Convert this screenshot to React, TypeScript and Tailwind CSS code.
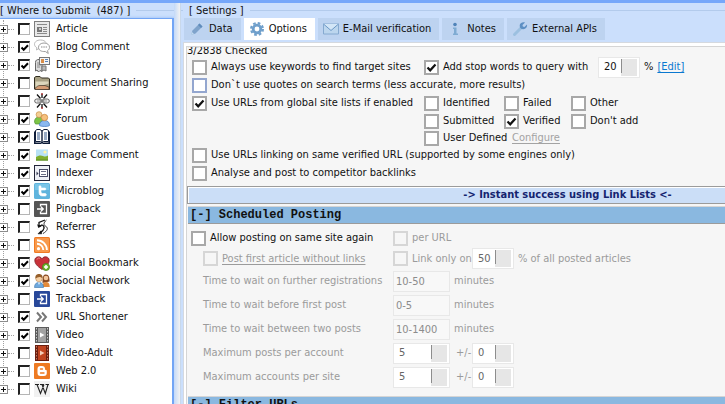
import { useId, type ReactNode } from 'react';
import clsx from 'clsx';

/* ---------- tree icons (16x16) ---------- */

const icons: Record<string, ReactNode> = {
  article: (
    <>
      <rect x=".5" y=".5" width="15" height="15" fill="#e9e9e9" stroke="#7d7d7d" />
      <path d="M3 3.500h10M3 12.500h10M9 8.500h4M9 10.500h4M9 6.500h4" stroke="#8a8a8a" />
      <rect x="3" y="6" width="5" height="5" fill="#777" />
      <rect x="5" y="7" width="2" height="2" fill="#ccc" />
    </>
  ),
  blog: (
    <>
      <path d="M6.500 1C3 1 .5 2.800.5 5.200c0 1.500.9 2.700 2.300 3.500L2.500 11l2.500-1.700" fill="#fff" stroke="#b9b9b9" />
      <path d="M6.500 1c2.500 0 4.800 1 5.600 2.700" fill="none" stroke="#b9b9b9" />
      <path d="M10 4c3.200 0 5.500 1.800 5.500 4.300 0 1.500-.8 2.700-2 3.400l.8 2.800-3-2.000C7 12.900 4.500 11 4.500 8.300 4.500 5.800 6.800 4 10 4z" fill="#fff" stroke="#9d9d9d" />
      <path d="M7 8h1.500M9.300 8h1.500M11.600 8h1.500" stroke="#8b8b8b" />
    </>
  ),
  directory: (
    <>
      <path d="M1.500 5.500C1.500 3 3 2.500 5 2.500h3v12l-2-1-1.500 1.500-1.500-2-1.500 1z" fill="#ddd" stroke="#666" />
      <path d="M3 6h4M3 8h4M3 10h3" stroke="#8a8a8a" />
      <path d="M8 9h4v5l-2-1-2 1z" fill="#bbb" stroke="#777" />
      <rect x="5.500" y=".5" width="10" height="7" fill="#f5f5f5" stroke="#777" />
      <rect x="7" y="2" width="3" height="4" fill="#d98e4a" />
      <path d="M11 2.500h3M11 4.500h3" stroke="#5b84b8" />
    </>
  ),
  folder: (
    <>
      <path d="M.5 14V2.500L2 1.500h4L7.500 3h7l1 1v10.500z" fill="#a8a184" stroke="#302d20" />
      <path d="M1.500 6.500h13v2l-6 2-7 2z" fill="#dcd7bd" />
      <path d="M1 13.500c2-2 3-3 5-3h5l4 1.500v2.500H1z" fill="#d49c74" stroke="#40352a" strokeWidth=".7" />
    </>
  ),
  exploit: (
    <>
      <path d="m3 1.500 3.500 4M8 .5V5M13 1.500l-3.500 4M3 14.500l3.500-4M8 15.500V11M13 14.500l-3.500-4" stroke="#111" strokeWidth="1.300" />
      <path d="M8 0v2M8 14v2" stroke="#c22" />
      <rect x=".7" y="6" width="6.300" height="4" rx="2" fill="#eee" stroke="#666" />
      <rect x="9" y="6" width="6.300" height="4" rx="2" fill="#eee" stroke="#666" />
      <path d="M3 8h3M10 8h3" stroke="#999" />
      <path d="M8 6v4" stroke="#333" />
    </>
  ),
  forum: (
    <>
      <path d="M.5 11C.5 7.500 2.500 6 5 6s4 2 4 5l-1 2H1.500z" fill="#7cc546" stroke="#4d9030" strokeWidth=".7" />
      <circle cx="5" cy="3.600" r="2.900" fill="#f3cf94" stroke="#c98f45" strokeWidth=".7" />
      <path d="M5.500 14.500c0-3.500 2-5 5-5s5 1.500 5 5c-1 1.300-9 1.300-10 0z" fill="#8ab8f0" stroke="#3f76bf" strokeWidth=".7" />
      <circle cx="10.500" cy="6.500" r="3.200" fill="#f6c07c" stroke="#c98139" strokeWidth=".7" />
    </>
  ),
  guestbook: (
    <>
      <path d="M0 2.500h1.500v11H7L8 15l1-1.500h5.500v-11H16V15H0z" fill="#0e1c38" />
      <path d="M1.500 1.500 3 .5h3L8 2l2-1.500h3l1.500 1v11h-5L8 14l-1.500-1.500h-5z" fill="#fff" stroke="#0e1c38" />
      <path d="M8 2v11" stroke="#0e1c38" strokeWidth="1.400" />
      <path d="M3 4h3M3 6h3M3 8h3M3 10h3M10 4h3M10 6h3M10 8h3M10 10h3" stroke="#33568a" />
    </>
  ),
  image: (
    <>
      <rect x="2" y="2.500" width="12" height="11" fill="#b7e1f5" />
      <path d="M2 10c2-1.500 5-2 7-1s3.500.5 5-.5v5H2z" fill="#7fae2d" />
      <circle cx="11" cy="5" r="1.600" fill="#fff6a8" />
      <path d="M2 13h12" stroke="#5f8a25" />
    </>
  ),
  indexer: (
    <>
      <rect x=".5" y=".5" width="15" height="15" fill="#eef0f6" stroke="#23253a" />
      <rect x="5.500" y="4.500" width="8" height="7" fill="#fff" stroke="#4a4d68" />
      <path d="M7 6.500h5M7 9.500h5" stroke="#6a6d86" />
      <path d="M2.500 6.500 4.500 8.500l-2 2z" fill="#33364f" />
    </>
  ),
  microblog: (
    <>
      <rect width="16" height="16" rx="1.500" fill="#5fb4dd" />
      <path d="M1 1h14v6H1z" fill="#7ac5e8" />
      <path d="M5 3.500c0-1 2-1 2 0V5h4c1.200 0 1.200 2 0 2H7v1.500c0 1.500.8 2 2 2h2.300c1.400 0 1.400 2.500 0 2.500H8.500C6 13 5 11.500 5 9z" fill="#fff" stroke="#fff" strokeWidth=".6" />
    </>
  ),
  pingback: (
    <>
      <rect width="16" height="16" rx="1" fill="#555" />
      <path d="M6.500 5.500v-2h6v9h-6v-2M3 8h6M7 5.700 9.300 8 7 10.300" fill="none" stroke="#fff" strokeWidth="1.300" />
    </>
  ),
  referrer: (
    <>
      <path d="M11 1 5 3.500v4l3-1.500c3 1 3 5-2 8" fill="none" stroke="#111" strokeWidth="1.300" />
      <path d="M12.500 1C9 4 9.500 6 12 7.500s1.500 4.500-3 7" fill="none" stroke="#333" />
      <path d="m3.500 5.500 1 3 3-1.500M4 14.800l3-3 .8 3z" fill="#111" stroke="#111" strokeWidth=".6" />
    </>
  ),
  rss: (
    <>
      <rect width="16" height="16" rx="1.500" fill="#f07a22" />
      <rect x="1" y="1" width="14" height="14" rx="1" fill="#f8994b" />
      <circle cx="4.500" cy="11.700" r="1.600" fill="#fff" />
      <path d="M3 6.800a6.300 6.300 0 0 1 6.300 6.300M3 3.200a9.900 9.900 0 0 1 9.900 9.900" fill="none" stroke="#fff" strokeWidth="1.900" />
    </>
  ),
  bookmark: (
    <>
      <path d="M8 14.500C3 11 .8 8.500.8 5.300.8 1.500 6 .5 8 3.800 10 .5 15.200 1.500 15.200 5.300 15.200 8.500 13 11 8 14.500z" fill="#c8323a" stroke="#7d2226" strokeWidth=".8" />
      <path d="M3 4.500C3.500 3 5 2.500 6 3.500" fill="none" stroke="#ef8f8f" />
      <circle cx="12" cy="12" r="3.600" fill="#6fb52c" stroke="#44801a" strokeWidth=".7" />
      <path d="M12 10v4M10 12h4" stroke="#fff" strokeWidth="1.500" />
    </>
  ),
  network: (
    <>
      <path d="M8.500 10c0-6 .5-8.500 3.500-8.500s3.500 3 3.500 7z" fill="#8a4b22" />
      <circle cx="12" cy="5" r="2.300" fill="#f2c79c" />
      <path d="M8.500 14c0-3.500 1-5 3.500-5s3.700 1.500 3.700 5z" fill="#e38a3a" />
      <path d="M.5 14.500C.5 11 2 9.500 5 9.500s4.500 1.500 4.500 5z" fill="#6fa9de" stroke="#3b73ab" strokeWidth=".6" />
      <circle cx="5" cy="5.500" r="3.300" fill="#f5d0a5" stroke="#b27a42" strokeWidth=".5" />
      <path d="M1.500 5.500C1 2 3 1 5 1s4 1 3.600 4.500C7 3.500 4 3.500 1.500 5.500z" fill="#97602c" />
      <path d="M4 9.500 5 12l1-2.500z" fill="#fff" />
    </>
  ),
  trackback: (
    <>
      <rect width="16" height="16" rx="1" fill="#28489a" />
      <path d="M6.500 5.500v-2h6v9h-6v-2M3 8h6M7 5.700 9.300 8 7 10.300" fill="none" stroke="#fff" strokeWidth="1.300" />
    </>
  ),
  shortener: (
    <path d="m3 3.500 4 4.500-4 4.500M8 3.500l4 4.500-4 4.500" fill="none" stroke="#777" strokeWidth="2" />
  ),
  video: (
    <>
      <rect x="1" width="14" height="16" fill="#5c5c5c" />
      <rect x="4" y="1" width="8" height="14" fill="#a2a2a2" />
      <path d="M2.500 1v14M13.500 1v14" stroke="#ccc" strokeDasharray="1.500 1.500" />
      <path d="M6 5.500v5l4.500-2.500z" fill="#fff" />
    </>
  ),
  adult: (
    <>
      <rect x="1" width="14" height="16" fill="#6b1f10" />
      <rect x="4" y="1" width="8" height="14" fill="#c04420" />
      <path d="M2.500 1v14M13.500 1v14" stroke="#c87a60" strokeDasharray="1.500 1.500" />
      <path d="M6 5.500v5l4.500-2.500z" fill="#f4cdb8" />
    </>
  ),
  web: (
    <>
      <rect width="16" height="16" rx="1" fill="#ee7a22" />
      <path d="M3.500 6c0-2 1-3 3-3H8c2 0 3 1.200 3 2.800 0 .9.400 1.200 1 1.200s.8.300.8.900V10c0 2-1 3-3 3H6.500c-2 0-3-1-3-3z" fill="#fff" />
      <path d="M6.500 6h2M6.500 10h3.500" stroke="#ee7a22" strokeWidth="1.400" strokeLinecap="round" />
    </>
  ),
  wiki: (
    <>
      <rect width="16" height="16" fill="#f1f1f1" />
      <path d="M1 3.500h4M6.500 3.500h3.500M11.500 3.500H15M3 3.500l3.500 9 3.500-9M6 3.500h2l3.300 9 2.700-9" fill="none" stroke="#222" strokeWidth="1.100" />
    </>
  ),
};

const platforms = [
  { name: 'Article', icon: 'article', on: false },
  { name: 'Blog Comment', icon: 'blog', on: true },
  { name: 'Directory', icon: 'directory', on: true },
  { name: 'Document Sharing', icon: 'folder', on: false },
  { name: 'Exploit', icon: 'exploit', on: false },
  { name: 'Forum', icon: 'forum', on: true },
  { name: 'Guestbook', icon: 'guestbook', on: true },
  { name: 'Image Comment', icon: 'image', on: true },
  { name: 'Indexer', icon: 'indexer', on: true },
  { name: 'Microblog', icon: 'microblog', on: true },
  { name: 'Pingback', icon: 'pingback', on: false },
  { name: 'Referrer', icon: 'referrer', on: false },
  { name: 'RSS', icon: 'rss', on: false },
  { name: 'Social Bookmark', icon: 'bookmark', on: true },
  { name: 'Social Network', icon: 'network', on: true },
  { name: 'Trackback', icon: 'trackback', on: false },
  { name: 'URL Shortener', icon: 'shortener', on: true },
  { name: 'Video', icon: 'video', on: true },
  { name: 'Video-Adult', icon: 'adult', on: false },
  { name: 'Web 2.0', icon: 'web', on: false },
  { name: 'Wiki', icon: 'wiki', on: false },
];

const tabs = [
  {
    name: 'Data',
    icon: (
      <>
        <path d="m2 14 1.500-4.500 7-7 3 3-7 7z" fill="#7fa3cb" />
        <path d="m9 4 3 3 1.500-1.500-3-3z" fill="#5f8cbc" />
        <path d="m2 14 1-3 2 2z" fill="#c4dcf0" />
      </>
    ),
  },
  {
    name: 'Options',
    icon: (
      <>
        <circle cx="8" cy="8" r="5.900" fill="none" stroke="#6f9fcb" strokeWidth="2.200" strokeDasharray="2.600 2.034" />
        <circle cx="8" cy="8" r="3.800" fill="none" stroke="#6f9fcb" strokeWidth="2.800" />
      </>
    ),
  },
  {
    name: 'E-Mail verification',
    icon: (
      <>
        <path d="M.5 3h15v10H.5z" fill="#bcd6ee" stroke="#86aad0" />
        <path d="m.5 3 7.500 6.500L15.500 3" fill="#d3e6f7" stroke="#6c97c5" />
      </>
    ),
  },
  {
    name: 'Notes',
    icon: (
      <>
        <circle cx="8" cy="3.500" r="1.800" fill="#4f83b8" />
        <path d="M6 6.500h3.500v6H11V14H6v-1.500h1V8H6z" fill="#7fabd2" />
      </>
    ),
  },
  {
    name: 'External APIs',
    icon: (
      <>
        <path d="m2.500 13.500 7-7" stroke="#9cc0e0" strokeWidth="3" strokeLinecap="round" />
        <path d="M13 1.500 10.500 4l.3 1.600 1.600.3L15 3.500c.5 2.500-1.200 4.700-3.700 4.700-2.400 0-3.600-1.500-3.600-3.500C7.700 2.500 10 .8 13 1.500z" fill="#5d8fc3" />
      </>
    ),
  },
];

function Icon({ children }: { children: ReactNode }) {
  return (
    <svg className="size-4 shrink-0" viewBox="0 0 16 16" aria-hidden="true">
      {children}
    </svg>
  );
}

interface CheckProps {
  children: ReactNode;
  checked?: boolean;
  disabled?: boolean;
  focused?: boolean;
  underline?: boolean;
}

function Check({ children, checked, disabled, focused, underline }: CheckProps) {
  return (
    <label className={clsx('flex items-center gap-1 whitespace-nowrap', disabled && 'text-[#9b9b9b]')}>
      <span className="grid size-[15px] shrink-0 place-items-center">
        <input
          type="checkbox"
          defaultChecked={checked}
          disabled={disabled}
          className={clsx(
            'peer col-start-1 row-start-1 size-[15px] appearance-none border-2',
            disabled ? 'border-[#d6d6d6] bg-[#f6f6f6]' : focused ? 'border-[#93a6cf] bg-white' : 'border-[#a8a8a8] bg-white',
          )}
        />
        <svg className="pointer-events-none invisible col-start-1 row-start-1 size-[11px] peer-checked:visible" viewBox="0 0 11 11">
          <path d="m1.500 5.500 2.700 2.800L9.500 2.500" fill="none" stroke="#111" strokeWidth="2.200" />
        </svg>
      </span>
      <span className={clsx(underline && 'underline underline-offset-2')}>{children}</span>
    </label>
  );
}

function Spin({ value, label, wide, disabled }: { value: number; label: string; wide?: boolean; disabled?: boolean }) {
  return (
    <span
      className={clsx(
        'flex h-[21px] shrink-0 items-center border border-[#e8e8e8] bg-white pr-0.5',
        wide ? 'w-[57px]' : 'w-[42px]',
      )}
    >
      <input
        aria-label={label}
        defaultValue={value}
        disabled={disabled}
        className={clsx('min-w-0 flex-1 bg-transparent pl-[5px]', disabled ? 'text-[#666]' : 'text-[#111]')}
      />
      <button
        type="button"
        aria-label={`${label} step`}
        disabled={disabled}
        className="flex h-[17px] w-4 items-start bg-[#e6e6e6]"
      >
        <span className="h-[14px] w-px bg-[#8d8d8d]" />
      </button>
    </span>
  );
}

function SectionHeader({ children }: { children: ReactNode }) {
  return (
    <h2 className="ml-px h-[18px] border-y border-t-[#d5d5d5] border-b-[#9b9b9b] bg-[#8ab8e0] pl-[2px] font-['Courier_New','Liberation_Mono',monospace] text-[12px] leading-[16px] font-bold whitespace-nowrap text-[#111]">
      <button type="button">{children}</button>
    </h2>
  );
}

function PlatformTree() {
  return (
    <section className="flex w-[174px] shrink-0 flex-col">
      <h2 className="flex h-[15px] items-center gap-1.5 leading-[15px] whitespace-pre">
        [ Where to Submit  (487) ]<span className="h-px flex-1 bg-[#b3cbec]" />
      </h2>
      <div className="flex-1 overflow-hidden border-t border-r-2 border-[#72a5f5] bg-white pt-px shadow-[1px_0_3px_#8fb8f5]">
        <ul className="relative">
          <li aria-hidden="true" className="absolute top-0 bottom-3 left-[3px] border-l border-dotted border-[#a0a0a0]" />
          {platforms.map((p) => (
            <TreeRow key={p.name} {...p} />
          ))}
        </ul>
      </div>
    </section>
  );
}

function TreeRow({ name, icon, on }: { name: string; icon: string; on: boolean }) {
  const id = useId();
  return (
    <li className="relative flex h-[18px] items-center">
      <button
        type="button"
        aria-label={`Expand ${name}`}
        className="h-[9px] w-2 border border-l-0 border-[#8c8c8c] bg-white"
      >
        <svg className="block size-[7px]" viewBox="0 0 7 7">
          <path d="M1 3.500h5M3.500 1v5" stroke="#111" />
        </svg>
      </button>
      <span className="w-[10px] pr-1">
        <span className="block border-t border-dotted border-[#a0a0a0]" />
      </span>
      <span className="grid size-3 place-items-center">
        <input
          id={id}
          type="checkbox"
          defaultChecked={on}
          className="peer col-start-1 row-start-1 size-3 appearance-none border border-t-2 border-l-2 border-[#b5b5b5] border-t-[#222] border-l-[#222] bg-white"
        />
        <svg className="pointer-events-none invisible col-start-1 row-start-1 size-[9px] peer-checked:visible" viewBox="0 0 9 9">
          <path d="m1.500 4.500 2.200 2.200L8 2.200" fill="none" stroke="#000" strokeWidth="2" />
        </svg>
      </span>
      <label htmlFor={id} className="flex items-center gap-1.5 pl-1 whitespace-nowrap">
        <Icon>{icons[icon]}</Icon>
        {name}
      </label>
    </li>
  );
}

function WaitRow({ label, value }: { label: string; value: string }) {
  const id = useId();
  return (
    <div className="flex h-6 items-center text-[#9b9b9b]">
      <label htmlFor={id} className="w-[202px] shrink-0 pl-3">
        {label}
      </label>
      <input
        id={id}
        disabled
        defaultValue={value}
        className="h-[21px] w-[57px] border border-[#e8e8e8] bg-[#f8f8f8] pl-0.5 text-[#8c8c8c]"
      />
      <span className="pl-1">minutes</span>
    </div>
  );
}

function LimitRow({ label }: { label: string }) {
  return (
    <div className="flex h-6 items-center text-[#9b9b9b]">
      <span className="w-[202px] shrink-0 pl-3">{label}</span>
      <Spin wide disabled label={label} value={5} />
      <span className="w-[22px] pl-1.5">+/-</span>
      <Spin disabled label={`${label} variation`} value={0} />
    </div>
  );
}

function OptionsPanel() {
  return (
    <div className="ml-[2px] min-h-0 flex-1 border-t border-l border-[#d5d9df] bg-white pt-[3px] pl-[2px]">
      <div className="h-full overflow-hidden border-t border-l border-[#d5d5d5] bg-[#f6f6f6]">
        <p className="-mt-1 leading-[15px]">3/2838 Checked</p>

        <div className="pl-[5px]">
          <div className="flex h-[18px] items-center">
            <div className="w-[232px] shrink-0">
              <Check>Always use keywords to find target sites</Check>
            </div>
            <div className="w-[174px] shrink-0">
              <Check checked>Add stop words to query with</Check>
            </div>
            <Spin label="Stop word percentage" value={20} />
            <span className="pl-1">%</span>
            <a href="#edit" className="pl-1 text-[#0a78d0] underline underline-offset-2">
              [Edit]
            </a>
          </div>
          <div className="flex h-[18px] items-center">
            <Check focused>Don`t use quotes on search terms (less accurate, more results)</Check>
          </div>
          <div className="flex">
            <div className="flex h-[18px] w-[232px] shrink-0 items-center">
              <Check checked>Use URLs from global site lists if enabled</Check>
            </div>
            <div className="grid grid-cols-[80px_67px_auto] grid-rows-[18px_18px_16px] items-center">
              <Check>Identified</Check>
              <Check>Failed</Check>
              <Check>Other</Check>
              <Check>Submitted</Check>
              <Check checked>Verified</Check>
              <Check>Don't add</Check>
              <Check>User Defined</Check>
              <a href="#configure" className="pl-2 text-[#a3a3a3] underline underline-offset-2">
                Configure
              </a>
            </div>
          </div>
          <div className="flex h-[18px] items-center">
            <Check>Use URLs linking on same verified URL (supported by some engines only)</Check>
          </div>
          <div className="flex h-[18px] items-center">
            <Check>Analyse and post to competitor backlinks</Check>
          </div>
        </div>

        <button
          type="button"
          className="mt-1 mb-0.5 block h-[18px] w-full border border-r-0 border-[#9b9b9b] bg-[#cbdef7] pl-[222px] leading-[16px] font-bold whitespace-nowrap text-[#15246f] shadow-[inset_1px_1px_0_#fff]"
        >
          -&gt; Instant success using Link Lists &lt;-
        </button>

        <SectionHeader>[-] Scheduled Posting</SectionHeader>
        <div className="pt-1 pb-[7px] pl-1 whitespace-nowrap">
          <div className="flex h-5 items-center">
            <div className="w-[202px] shrink-0">
              <Check>Allow posting on same site again</Check>
            </div>
            <Check disabled>per URL</Check>
          </div>
          <div className="flex h-[21px] items-center">
            <div className="w-[202px] shrink-0 pl-3">
              <Check disabled underline>
                Post first article without links
              </Check>
            </div>
            <div className="w-[79px] shrink-0">
              <Check disabled>Link only on</Check>
            </div>
            <Spin disabled label="Link share" value={50} />
            <span className="pl-1 text-[#9b9b9b]">% of all posted articles</span>
          </div>
          <WaitRow label="Time to wait on further registrations" value="10-50" />
          <WaitRow label="Time to wait before first post" value="0-5" />
          <WaitRow label="Time to wait between two posts" value="10-1400" />
          <LimitRow label="Maximum posts per account" />
          <LimitRow label="Maximum accounts per site" />
        </div>
        <SectionHeader>[-] Filter URLs</SectionHeader>
      </div>
    </div>
  );
}

export default function App() {
  return (
    <div className="flex h-screen overflow-hidden border-t-[3px] border-[#75a7fa] bg-[#cbdffc] font-[Tahoma,'DejaVu_Sans_Condensed','Noto_Sans',sans-serif] text-[11px] leading-[14px] text-[#111]">
      <PlatformTree />
      <div className="w-1.5 shrink-0 bg-gradient-to-r from-[#c3d9f8] to-[#f2f2f2]" />
      <main className="flex min-w-0 flex-1 flex-col border-l border-[#c9d8ea]">
        <h2 className="flex h-[15px] shrink-0 items-center gap-1.5 leading-[15px] whitespace-nowrap">
          <span className="h-px w-0.5 bg-[#b3cbec]" />
          [ Settings ]<span className="h-px flex-1 bg-[#b3cbec]" />
        </h2>
        <nav className="mb-0.5 flex h-[22px] shrink-0 gap-[3px] pl-[3px]">
          {tabs.map((tab) => (
            <button
              key={tab.name}
              type="button"
              className={clsx(
                'flex items-center gap-1 pr-2 pl-[5px] whitespace-nowrap',
                tab.name === 'Options' ? 'bg-white' : 'bg-[#bdd3f0]',
              )}
            >
              <Icon>{tab.icon}</Icon>
              {tab.name}
            </button>
          ))}
        </nav>
        <OptionsPanel />
      </main>
    </div>
  );
}
